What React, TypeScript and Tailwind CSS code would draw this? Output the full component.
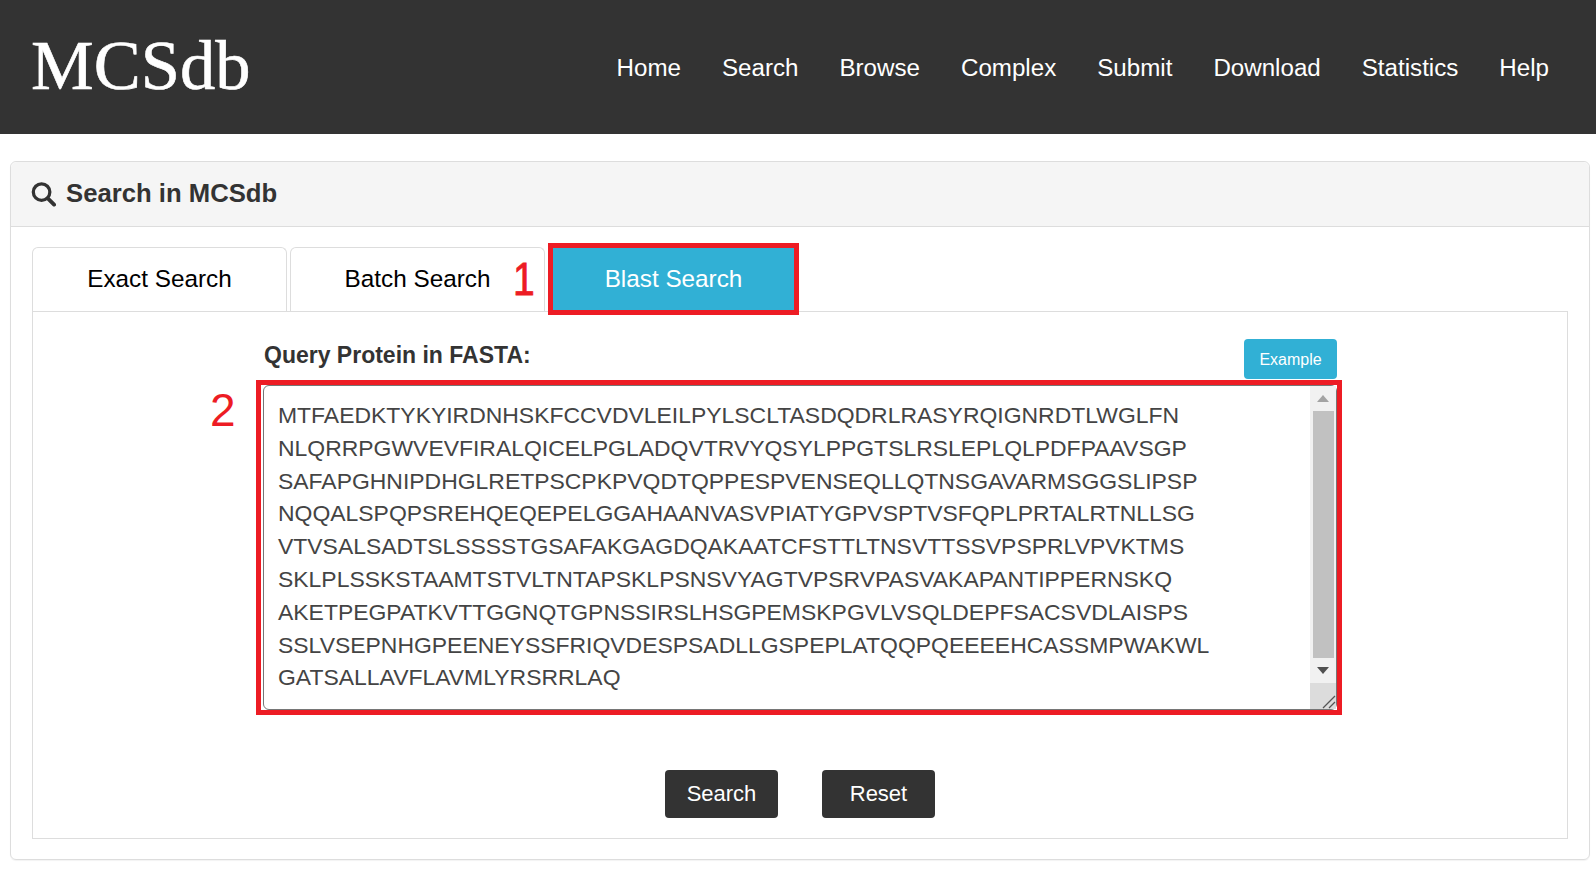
import React from "react";

const NAV = ["Home", "Search", "Browse", "Complex", "Submit", "Download", "Statistics", "Help"];
const LINES = [
  "MTFAEDKTYKYIRDNHSKFCCVDVLEILPYLSCLTASDQDRLRASYRQIGNRDTLWGLFN",
  "NLQRRPGWVEVFIRALQICELPGLADQVTRVYQSYLPPGTSLRSLEPLQLPDFPAAVSGP",
  "SAFAPGHNIPDHGLRETPSCPKPVQDTQPPESPVENSEQLLQTNSGAVARMSGGSLIPSP",
  "NQQALSPQPSREHQEQEPELGGAHAANVASVPIATYGPVSPTVSFQPLPRTALRTNLLSG",
  "VTVSALSADTSLSSSSTGSAFAKGAGDQAKAATCFSTTLTNSVTTSSVPSPRLVPVKTMS",
  "SKLPLSSKSTAAMTSTVLTNTAPSKLPSNSVYAGTVPSRVPASVAKAPANTIPPERNSKQ",
  "AKETPEGPATKVTTGGNQTGPNSSIRSLHSGPEMSKPGVLVSQLDEPFSACSVDLAISPS",
  "SSLVSEPNHGPEENEYSSFRIQVDESPSADLLGSPEPLATQQPQEEEEHCASSMPWAKWL",
  "GATSALLAVFLAVMLYRSRRLAQ",
];

export default function App() {
  return (
    <div className="min-h-[874px] bg-white font-['Liberation_Sans',Arial,sans-serif] text-[#333]">
      <header className="h-[134px] bg-[#333] flex items-center justify-between pl-[31px] pr-[47px]">
        <div className="font-['Liberation_Serif',serif] text-[70.5px] leading-none text-white [-webkit-text-stroke:0.6px_white] pb-[3px]">MCSdb</div>
        <nav className="flex gap-[41px] text-[24.15px] text-white pt-[2px]">
          {NAV.map((n) => (
            <span key={n}>{n}</span>
          ))}
        </nav>
      </header>

      <main className="pt-[27px] pl-[10px] pr-[6px]">
        <section className="border border-[#ddd] rounded-[6px] shadow-[0_1px_1px_rgba(0,0,0,0.05)]">
          <div className="h-[65px] bg-[#f5f5f5] border-b border-[#ddd] rounded-t-[6px] flex items-center pl-[20px] gap-[10px]">
            <svg width="25" height="26" viewBox="0 0 26 26" fill="none" stroke="#333" strokeWidth="3.4">
              <circle cx="11" cy="11" r="8.6" />
              <path d="M17.5 17.5L24 24" strokeLinecap="round" strokeWidth="4" />
            </svg>
            <h2 className="text-[25.7px] font-bold pb-[2px]">Search in MCSdb</h2>
          </div>

          <div className="px-[21px] pt-[20px] pb-[20px]">
            <div className="relative flex gap-[3px] h-[64px] text-[24.3px]">
              <div className="w-[255px] border border-b-0 border-[#ddd] rounded-t-[6px] flex items-center justify-center text-black pb-[1px]">
                Exact Search
              </div>
              <div className="w-[255px] border border-b-0 border-[#ddd] rounded-t-[6px] flex items-center justify-center text-black pb-[1px]">
                Batch Search
              </div>
              <div className="w-[251px] h-[72px] -mt-[4px] border-[5px] border-[#ed1c24] bg-[#31b0d5] text-white flex items-center justify-center relative z-10">
                Blast Search
              </div>
              <span className="absolute left-[479px] top-[0px] text-[46px] leading-[65px] text-[#ed1c24] [-webkit-text-stroke:0.8px_#ed1c24] scale-x-[0.85]">1</span>
            </div>

            <div className="relative border border-[#ddd] pt-[27px] pb-[20px]">
              <span className="absolute left-[177px] top-[75px] text-[46px] leading-none text-[#ed1c24]">2</span>

              <div className="ml-[231px] mr-[230px] h-[41px] flex justify-between">
                <label className="text-[23px] font-bold leading-[32px]">Query Protein in FASTA:</label>
                <button className="w-[93px] h-[40px] bg-[#31b0d5] rounded-[4px] text-white text-[16px] pt-[1px]">Example</button>
              </div>

              <div className="ml-[223px] mr-[225px] h-[335px] border-[5px] border-[#ed1c24] pl-[2px]">
                <div className="h-full border border-[#767676] rounded-[6px] flex bg-white">
                  <div className="flex-1 pl-[14px] pt-[13px] text-[22.95px] leading-[32.8px] text-[#444] whitespace-pre">
                    {LINES.map((l) => (
                      <div key={l}>{l}</div>
                    ))}
                  </div>
                  <div className="w-[26px] bg-[#f1f1f1] flex flex-col items-center">
                    <div className="h-[25px] w-full flex items-center justify-center">
                      <svg width="12" height="7" viewBox="0 0 12 7"><path d="M6 0L12 7H0Z" fill="#a3a3a3" /></svg>
                    </div>
                    <div className="w-[21px] flex-1 bg-[#c1c1c1]" />
                    <div className="h-[25px] w-full flex items-center justify-center">
                      <svg width="12" height="7" viewBox="0 0 12 7"><path d="M0 0H12L6 7Z" fill="#505050" /></svg>
                    </div>
                    <div className="h-[26px] w-full bg-[#dcdcdc] flex items-end justify-end">
                      <svg width="14" height="14" viewBox="0 0 14 14" stroke="#555" strokeWidth="1.3" fill="none">
                        <path d="M1 13L13 1M7 13L13 7" />
                      </svg>
                    </div>
                  </div>
                </div>
              </div>

              <div className="mt-[55px] flex justify-center gap-[44px]">
                <button className="w-[113px] h-[48px] bg-[#333] rounded-[4px] text-white text-[22px] pb-[2px]">Search</button>
                <button className="w-[113px] h-[48px] bg-[#333] rounded-[4px] text-white text-[22px] pb-[2px]">Reset</button>
              </div>
            </div>
          </div>
        </section>
      </main>
    </div>
  );
}
